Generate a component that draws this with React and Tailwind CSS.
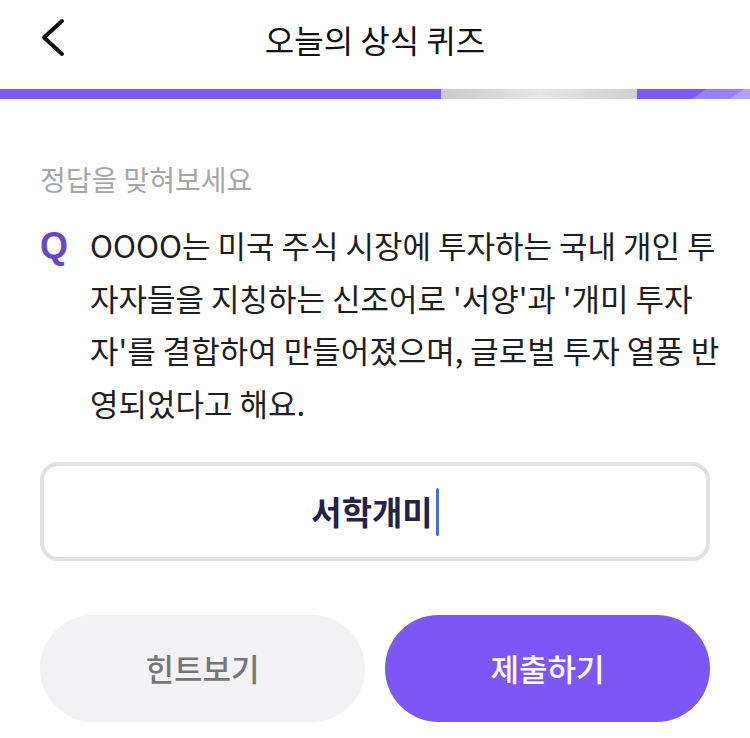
import React from "react";

const kr = { fontFamily: '"Noto Sans CJK KR", "Noto Sans", sans-serif' };

const BackIcon = () => (
  <svg width="30" height="44" viewBox="0 0 30 44" fill="none">
    <path
      d="M24 4 L6 20.5 L24 37"
      stroke="#111"
      strokeWidth="4"
      strokeLinecap="round"
      strokeLinejoin="round"
    />
  </svg>
);

const ProgressBar = () => (
  <div className="flex h-[10px] w-full">
    <div className="w-[441px] bg-[#7b5af6]" />
    <div className="w-[196px] bg-gradient-to-r from-[#c9c9c9] via-[#e6e6e6] to-[#d0d0d0]" />
    <div className="relative flex-1 overflow-hidden bg-[#7b5af6]">
      {/* shine over the end of the bar */}
      <div className="absolute inset-y-0 left-[62px] w-[80px] -skew-x-[55deg] bg-[#9a80f5]" />
      <div className="absolute inset-y-0 left-[100px] w-[40px] -skew-x-[55deg] bg-[#b4a0f7]" />
    </div>
  </div>
);

export default function App() {
  return (
    <div className="min-h-screen w-[750px] bg-white" style={kr}>
      {/* Header */}
      <header className="grid h-[89px] grid-cols-[1fr_auto_1fr] items-center">
        <div className="pl-[38px] pb-[12px]">
          <BackIcon />
        </div>
        <h1 className="pb-[12px] text-[32px] font-normal text-[#111]">오늘의 상식 퀴즈</h1>
        <div />
      </header>

      <ProgressBar />

      <main className="px-[40px]">
        <p className="mt-[60px] text-[28px] leading-[40px] text-[#a6a6a6]">정답을 맞혀보세요</p>

        <div className="mt-[20px] flex gap-[22px]">
          <span
            className="pt-[1px] text-[36px] font-bold leading-[52px] text-[#6546cc]"
            style={{ fontFamily: '"Liberation Sans", Arial, sans-serif' }}
          >
            Q
          </span>
          <p className="flex-1 whitespace-nowrap text-[31px] leading-[52.5px] text-[#1e1e1e]">
            OOOO는 미국 주식 시장에 투자하는 국내 개인 투<br />
            자자들을 지칭하는 신조어로 '서양'과 '개미 투자<br />
            자'를 결합하여 만들어졌으며, 글로벌 투자 열풍 반<br />
            영되었다고 해요.
          </p>
        </div>

        <div className="mt-[33px] flex h-[99px] items-center justify-center rounded-[18px] border-4 border-[#e1e1e1]">
          <span className="text-[33px] font-bold text-[#25224a]">서학개미</span>
          <span className="ml-[3px] h-[48px] w-[3px] rounded-full bg-[#4b6be8]" />
        </div>

        <div className="mt-[54px] grid grid-cols-2 gap-[20px]">
          <button className="h-[107px] rounded-full bg-[#f2f2f4] text-[31px] font-medium text-[#767676]">
            힌트보기
          </button>
          <button className="h-[107px] rounded-full bg-[#7b57f5] text-[31px] font-medium text-white">
            제출하기
          </button>
        </div>
      </main>
    </div>
  );
}
